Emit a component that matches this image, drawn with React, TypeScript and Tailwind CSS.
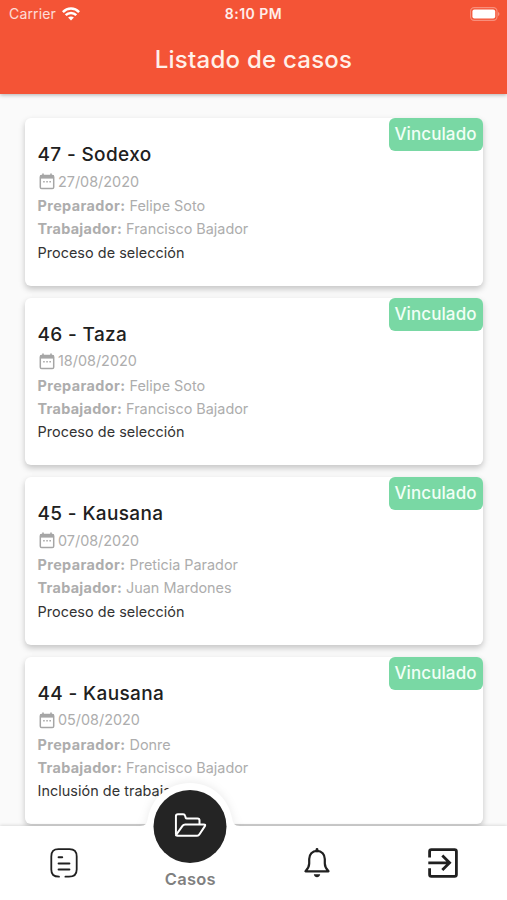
import React from 'react';

interface Caso {
  id: number;
  empresa: string;
  fecha: string;
  preparador: string;
  trabajador: string;
  etapa: string;
  estado: string;
}

const casos: Caso[] = [
  { id: 47, empresa: 'Sodexo', fecha: '27/08/2020', preparador: 'Felipe Soto', trabajador: 'Francisco Bajador', etapa: 'Proceso de selección', estado: 'Vinculado' },
  { id: 46, empresa: 'Taza', fecha: '18/08/2020', preparador: 'Felipe Soto', trabajador: 'Francisco Bajador', etapa: 'Proceso de selección', estado: 'Vinculado' },
  { id: 45, empresa: 'Kausana', fecha: '07/08/2020', preparador: 'Preticia Parador', trabajador: 'Juan Mardones', etapa: 'Proceso de selección', estado: 'Vinculado' },
  { id: 44, empresa: 'Kausana', fecha: '05/08/2020', preparador: 'Donre', trabajador: 'Francisco Bajador', etapa: 'Inclusión de trabajador', estado: 'Vinculado' },
];

const WifiIcon: React.FC = () => (
  <svg className="h-[14px] w-[18px]" viewBox="0 0 18 14" fill="none" stroke="white" strokeWidth="2.5">
    <path d="M0.9 5.1C5.4 0.4 12.6 0.4 17.1 5.1" />
    <path d="M3.7 8.2C6.7 5.2 11.3 5.2 14.3 8.2" />
    <path d="M6.1 10.6C7.8 9 10.2 9 11.9 10.6L9 13.6Z" fill="white" stroke="none" />
  </svg>
);

const BatteryIcon: React.FC = () => (
  <svg className="h-[14px] w-[30px]" viewBox="0 0 30 14" fill="none">
    <rect x="0.6" y="0.6" width="26.4" height="12.8" rx="3.6" stroke="white" strokeOpacity="0.35" strokeWidth="1.1" />
    <rect x="2.4" y="2.4" width="22.8" height="9.2" rx="2" fill="white" />
    <path d="M28.2 5C29.8 5.6 29.8 8.4 28.2 9Z" fill="white" fillOpacity="0.45" />
  </svg>
);

const CalendarIcon: React.FC = () => (
  <svg className="h-[17px] w-[16px] shrink-0" viewBox="0 0 16 17" fill="none" stroke="#a6a6a6">
    <rect x="1.3" y="2.6" width="13.4" height="13" rx="1.4" strokeWidth="1.5" />
    <path d="M1 4H15" strokeWidth="3.2" />
    <path d="M4 0.6V3M12 0.6V3" strokeWidth="1.6" />
    <path d="M4.2 8.7H5.7M7.3 8.7H8.8M10.4 8.7H11.9" strokeWidth="1.4" />
  </svg>
);

const DocumentIcon: React.FC = () => (
  <svg className="h-[30px] w-[28px]" viewBox="0 0 28 30" fill="none" stroke="#202020" strokeWidth="1.8" strokeLinecap="round">
    <path d="M9 28.7C3.6 28.7 1.3 26.6 1.3 21.5V8.5C1.3 3.3 3.6 1.2 8.5 1.2H19.5C24.4 1.2 26.7 3.3 26.7 8.5V21.5C26.7 26.6 24.4 28.7 19 28.7H15.4" />
    <path d="M8.6 9.3H12.2M8.6 15.4H19.4M8.6 21.6H19.4" strokeWidth="2" />
  </svg>
);

const FolderIcon: React.FC = () => (
  <svg className="mb-[3px] h-6 w-8" viewBox="0 0 32 24" fill="none" stroke="white" strokeWidth="2" strokeLinejoin="round">
    <path d="M1.4 21.5V3.2Q1.4 1.2 3.4 1.2H8.6Q10.2 1.2 10.6 2.8L11.2 4.8Q11.5 5.5 12.4 5.5H23Q25 5.5 25 7.5V11.3" />
    <path d="M1.6 21.8L8.2 12.6Q9.1 11.4 10.6 11.4H29.2Q31.6 11.4 30.4 13.1L25 21.2Q24.2 22.7 22.6 22.7H3Q1 22.7 1.6 21.8Z" />
  </svg>
);

const BellIcon: React.FC = () => (
  <svg className="h-[30px] w-[26px]" viewBox="0 0 26 30" fill="none" stroke="#202020" strokeWidth="2.2" strokeLinejoin="round">
    <path d="M13 2.8C8.2 2.8 5.2 6.4 5.2 11V15.4C5.2 18.2 3.8 20.7 1.5 23.3H24.5C22.2 20.7 20.8 18.2 20.8 15.4V11C20.8 6.4 17.8 2.8 13 2.8Z" />
    <path d="M13 1.4V3" strokeWidth="2.8" strokeLinecap="round" />
    <path d="M9.8 26.3H16.2C15.7 30.2 10.3 30.2 9.8 26.3Z" fill="#202020" stroke="none" />
  </svg>
);

const ExitIcon: React.FC = () => (
  <svg className="h-[30px] w-[30px]" viewBox="0 0 30 30" fill="none" stroke="#202020" strokeWidth="2.8">
    <path d="M1.6 9.5V3.4Q1.6 1.6 3.4 1.6H26.6Q28.4 1.6 28.4 3.4V26.6Q28.4 28.4 26.6 28.4H3.4Q1.6 28.4 1.6 26.6V20.2" />
    <path d="M0.3 14.8H20.8M14.3 7.5L21.6 14.8L14.3 22.1" />
  </svg>
);

const CasoCard: React.FC<{ caso: Caso }> = ({ caso }) => (
  <article className="relative h-[167.5px] shrink-0 rounded-[6px] bg-white px-[12.5px] pt-[24px] shadow-[0_3px_6px_rgba(0,0,0,0.22)]">
    <span className="absolute top-0 right-0 flex h-[33px] w-[94px] items-center justify-center rounded-[6px] bg-[#79d8a4] pt-px text-[17px] font-medium tracking-[0.1px] text-[#f1fff6]">
      {caso.estado}
    </span>
    <h2 className="h-[27px] text-[19px] leading-[25px] font-medium tracking-[0.35px] text-[#202020]">
      {caso.id} - {caso.empresa}
    </h2>
    <div className="text-[14.4px] leading-[23.3px] text-[#adadad]">
      <p className="flex h-[25px] items-center gap-[3px] pl-[1.5px]">
        <CalendarIcon />
        {caso.fecha}
      </p>
      <p><b className="font-bold tracking-[0.4px]">Preparador:</b> {caso.preparador}</p>
      <p><b className="font-bold tracking-[0.3px]">Trabajador:</b> {caso.trabajador}</p>
      <p className="tracking-[0.05px] text-[#333]">{caso.etapa}</p>
    </div>
  </article>
);

const TabBar: React.FC = () => (
  <nav className="relative z-10 grid h-[74px] shrink-0 grid-cols-4 bg-white px-px shadow-[0_-1px_3px_rgba(0,0,0,0.12)]">
    <button className="flex justify-center pt-[22px]">
      <DocumentIcon />
    </button>
    <button className="relative flex flex-col items-center justify-end pb-[10px]">
      {/* raised bump behind the active tab */}
      <svg className="absolute -top-[50px] left-1/2 h-[51px] w-[112px] -translate-x-1/2" viewBox="0 -6 112 51">
        <path className="drop-shadow-[0_-1px_4px_rgba(0,0,0,0.08)]" d="M6 45V44C12 44 13 41 14 36C18 15 35 1 56 1S94 15 98 36C99 41 100 44 106 44V45Z" fill="white" />
      </svg>
      <span className="absolute -top-[36px] left-1/2 flex h-[73px] w-[73px] -translate-x-1/2 items-center justify-center rounded-full bg-[#242424]">
        <FolderIcon />
      </span>
      <span className="relative text-[16.5px] leading-[22px] font-semibold tracking-[0.25px] text-[#808080]">Casos</span>
    </button>
    <button className="flex justify-center pt-[22px]">
      <BellIcon />
    </button>
    <button className="flex justify-center pt-[22px]">
      <ExitIcon />
    </button>
  </nav>
);

function App() {
  return (
    <div className="flex h-[900px] w-[507px] flex-col overflow-hidden bg-[#fafafa] font-['Inter',sans-serif] whitespace-nowrap">
      <header className="relative z-10 h-[94px] shrink-0 bg-[#f45436] text-white shadow-[0_1px_4px_rgba(0,0,0,0.3)]">
        <div className="grid h-[27px] grid-cols-3 items-center px-[7px] text-[14px]">
          <div className="flex items-center gap-[6px] pl-[2px] text-white/80">
            <span className="tracking-[0.15px]">Carrier</span>
            <WifiIcon />
          </div>
          <span className="text-center text-[14px] font-semibold tracking-[0.5px] text-white/90">8:10 PM</span>
          <div className="flex justify-end">
            <BatteryIcon />
          </div>
        </div>
        <h1 className="pt-[17px] text-center text-[24px] leading-[32px] font-medium tracking-[0.25px] text-[#fff0e9]">Listado de casos</h1>
      </header>
      <main className="flex min-h-0 flex-1 flex-col gap-[12px] overflow-hidden pt-[24px] pr-[24.5px] pl-[25px]">
        {casos.map((caso) => (
          <CasoCard key={caso.id} caso={caso} />
        ))}
      </main>
      <TabBar />
    </div>
  );
}

export default App;
